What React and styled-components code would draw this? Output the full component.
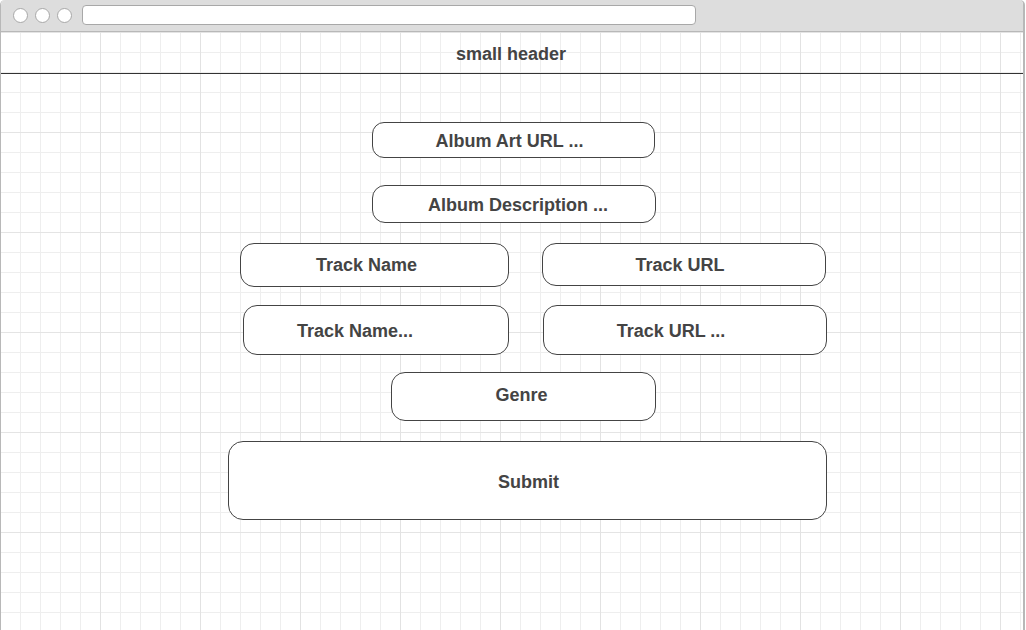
import React from "react";
import styled, { createGlobalStyle } from "styled-components";

const GlobalStyle = createGlobalStyle`
  html, body {
    margin: 0;
    padding: 0;
    background: #ffffff;
    overflow: hidden;
  }
  body {
    font-family: "Liberation Sans", Arial, sans-serif;
  }
`;

const Window = styled.div`
  width: 1025px;
  height: 630px;
  box-sizing: border-box;
  border-left: 1px solid #b8b8b8;
  border-right: 2px solid #b8b8b8;
  border-top-left-radius: 5px;
  border-top-right-radius: 5px;
  overflow: hidden;
  display: flex;
  flex-direction: column;
  background: #fff;
`;

const TitleBar = styled.div`
  height: 31px;
  flex-shrink: 0;
  background: #dddddd;
  border-bottom: 1px solid #b8b8b8;
  display: flex;
  align-items: center;
  padding-left: 12px;
  gap: 7px;
`;

const Dot = styled.span`
  width: 13px;
  height: 13px;
  border-radius: 50%;
  background: #fff;
  border: 1px solid #a8a8a8;
  flex-shrink: 0;
`;

const AddressBar = styled.div`
  margin-left: 3px;
  width: 612px;
  height: 18px;
  background: #fff;
  border: 1px solid #a8a8a8;
  border-radius: 4px;
  margin-top: -1px;
`;

const Canvas = styled.div`
  flex: 1;
  background-color: #fff;
  background-image:
    linear-gradient(to right, #e2e2e2 1px, transparent 1px),
    linear-gradient(to bottom, #e4e4e4 1px, transparent 1px),
    linear-gradient(to right, #eeeeee 1px, transparent 1px),
    linear-gradient(to bottom, #eeeeee 1px, transparent 1px);
  background-size: 100px 100px, 100px 100px, 20px 20px, 20px 20px;
  background-position: -1px 0, -1px 0, -1px 0, -1px 0;
  display: flex;
  flex-direction: column;
`;

const Header = styled.header`
  box-sizing: border-box;
  height: 42px;
  border-bottom: 1px solid #333;
  display: flex;
  align-items: center;
  justify-content: center;
  padding: 3px 2px 0 0;
  font-size: 18px;
  font-weight: 700;
  color: #444;
`;

const Form = styled.form`
  display: flex;
  flex-direction: column;
  align-items: flex-start;
  padding-top: 48px;
`;

const Row = styled.div`
  display: flex;
  margin-top: ${(p) => p.$top}px;
`;

const dy = (p) => (p.$dy === undefined ? 3 : p.$dy);

const Field = styled.div`
  box-sizing: border-box;
  width: ${(p) => p.$w}px;
  height: ${(p) => p.$h}px;
  margin-left: ${(p) => p.$x || 0}px;
  margin-top: ${(p) => p.$top || 0}px;
  border: 1px solid #444;
  border-radius: ${(p) => p.$r}px;
  background: #fff;
  display: flex;
  align-items: center;
  justify-content: center;
  padding-top: ${(p) => Math.max(0, dy(p))}px;
  padding-bottom: ${(p) => Math.max(0, -dy(p))}px;
  padding-left: ${(p) => Math.max(0, 2 * (p.$shift || 0))}px;
  padding-right: ${(p) => Math.max(0, -2 * (p.$shift || 0))}px;
  font-size: 18px;
  font-weight: 700;
  color: #444;
  white-space: nowrap;
`;

const App = () => {
  return (
    <>
      <GlobalStyle />
      <Window>
        <TitleBar>
          <Dot />
          <Dot />
          <Dot />
          <AddressBar />
        </TitleBar>
        <Canvas>
          <Header>small header</Header>
          <Form>
            <Field $x={371} $w={283} $h={36} $r={12} $shift={-4}>
              Album Art URL ...
            </Field>
            <Field $x={371} $top={27} $w={284} $h={38} $r={13} $shift={4}>
              Album Description ...
            </Field>
            <Row $top={20}>
              <Field $x={239} $w={269} $h={44} $r={14} $shift={-8} $dy={1}>
                Track Name
              </Field>
              <Field $x={33} $w={284} $h={43} $r={14} $shift={-4} $dy={1}>
                Track URL
              </Field>
            </Row>
            <Row $top={18}>
              <Field $x={242} $w={266} $h={50} $r={14} $shift={-21}>
                Track Name...
              </Field>
              <Field $x={34} $w={284} $h={50} $r={14} $shift={-14}>
                Track URL ...
              </Field>
            </Row>
            <Field $x={390} $top={17} $w={265} $h={49} $r={14} $shift={-2} $dy={-3}>
              Genre
            </Field>
            <Field $x={227} $top={20} $w={599} $h={79} $r={15} $shift={1}>
              Submit
            </Field>
          </Form>
        </Canvas>
      </Window>
    </>
  );
};

export default App;
